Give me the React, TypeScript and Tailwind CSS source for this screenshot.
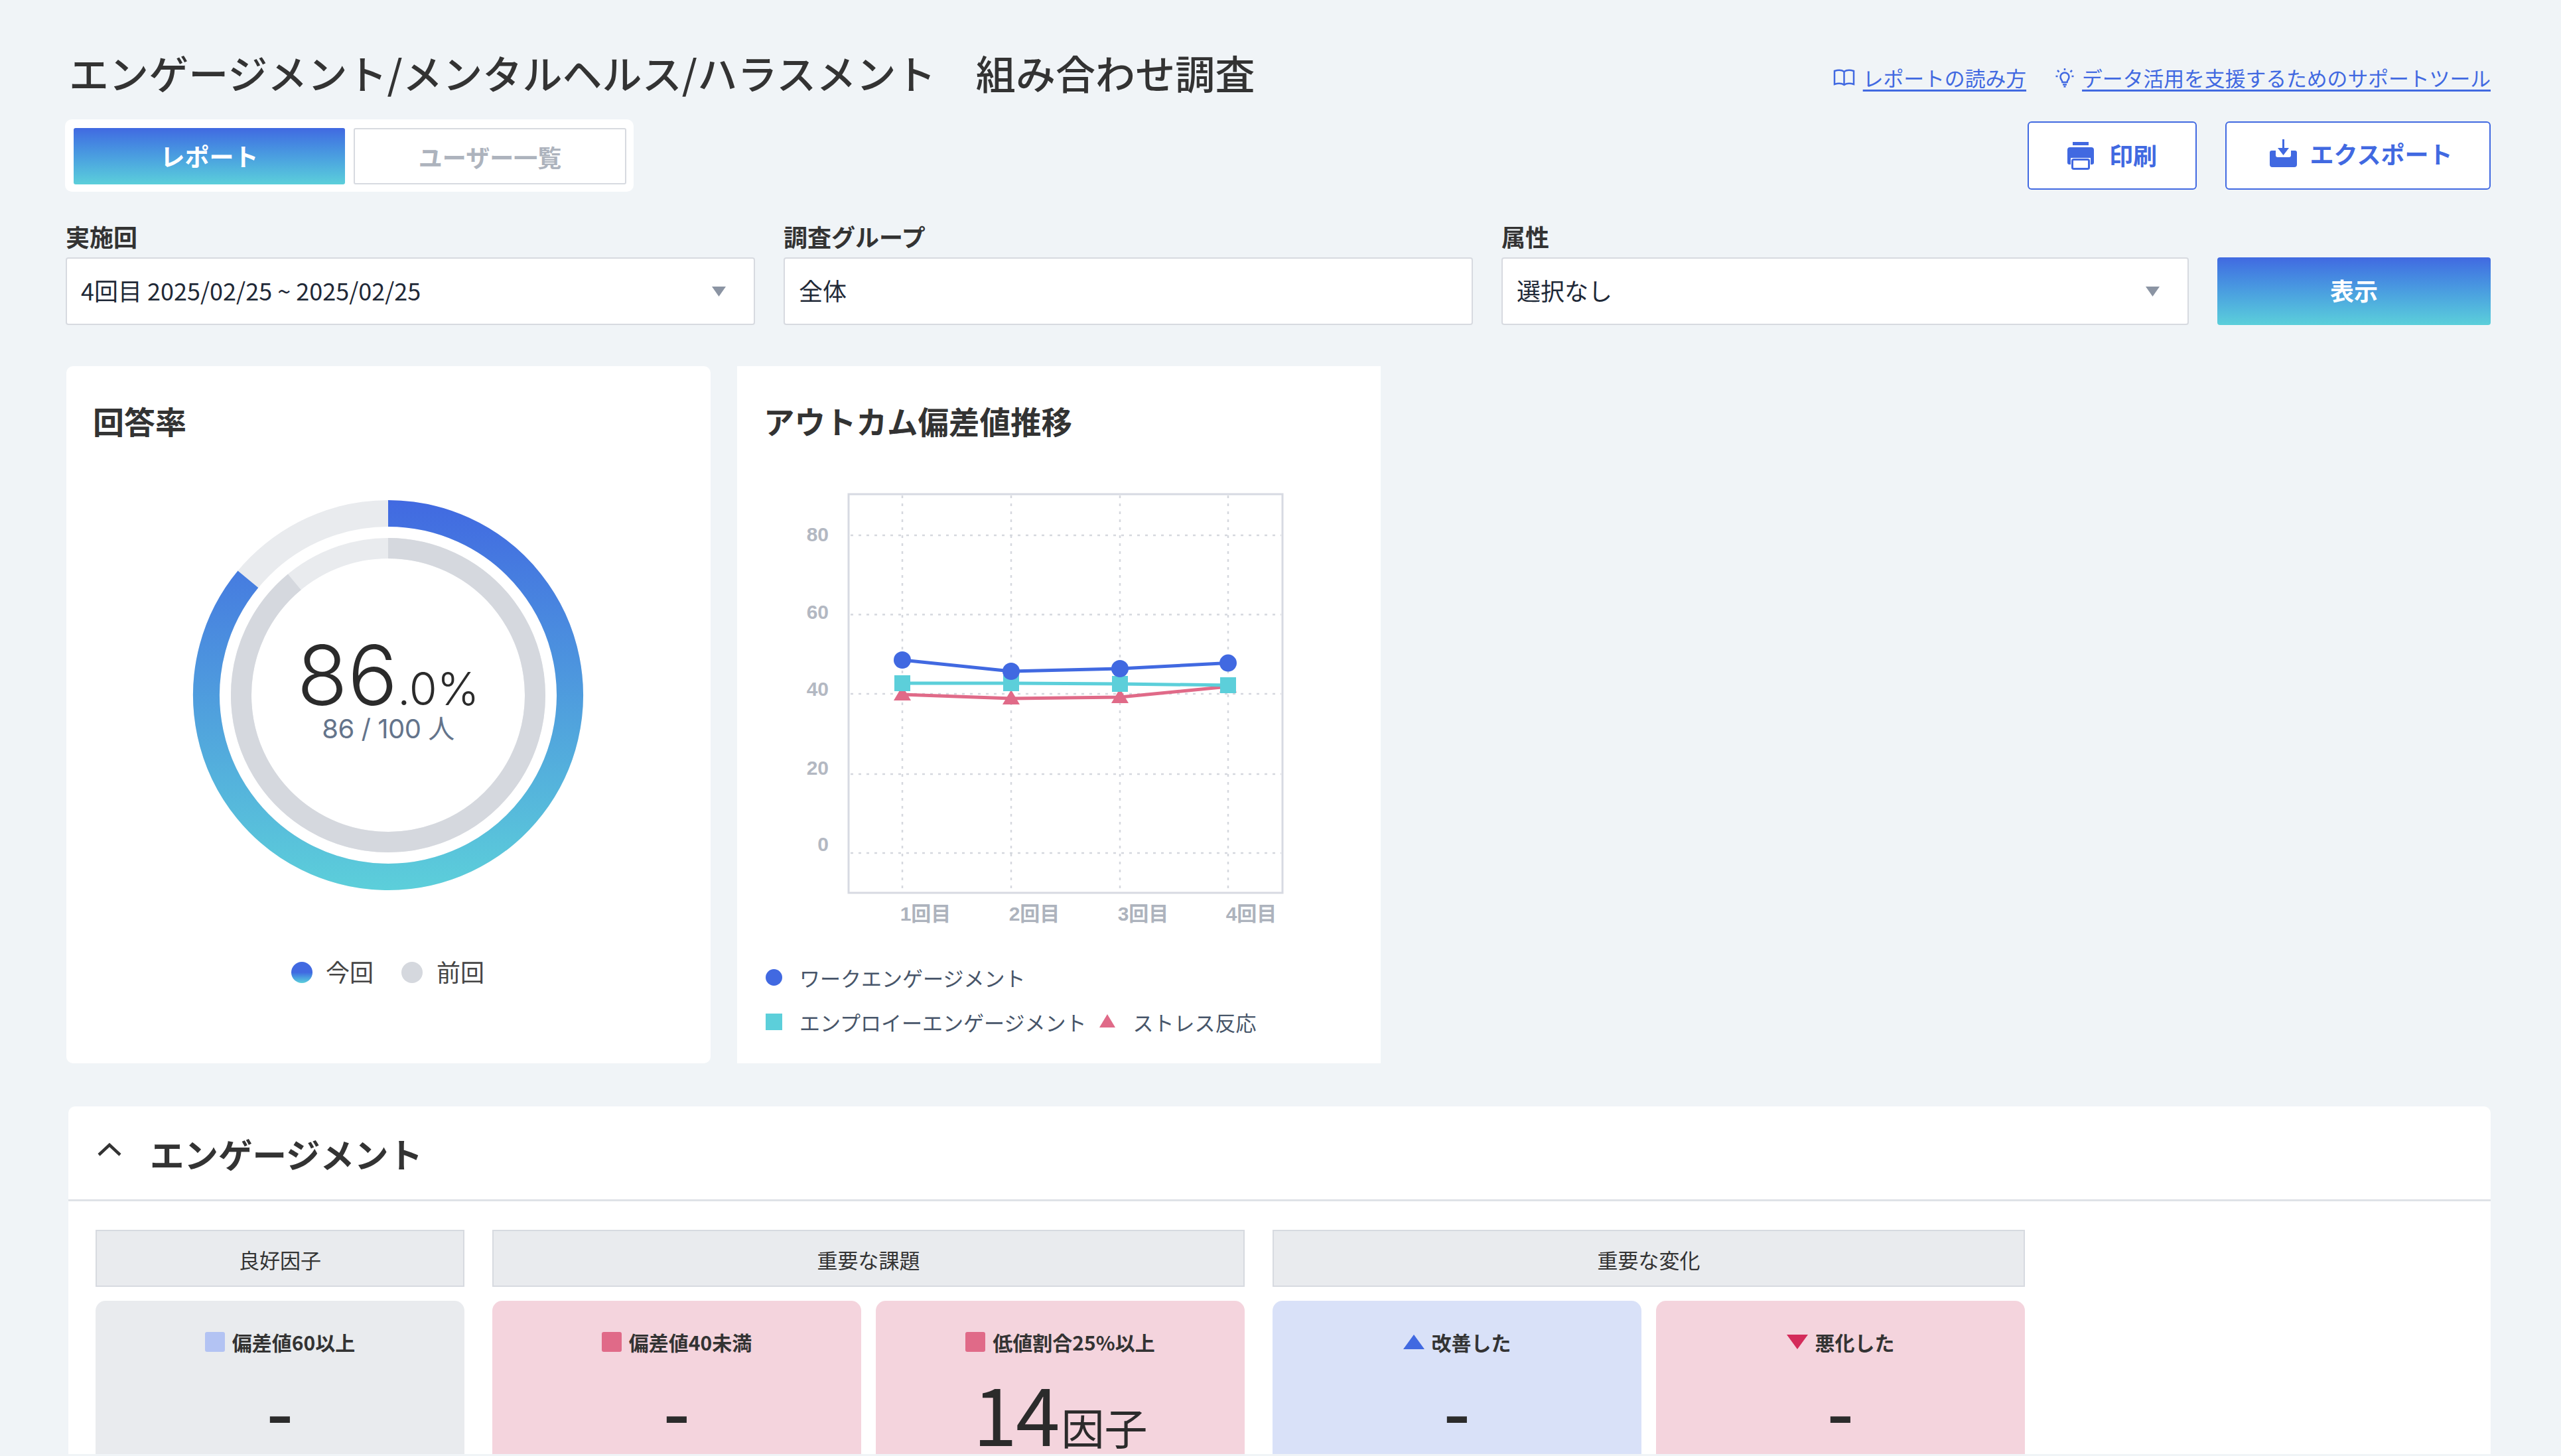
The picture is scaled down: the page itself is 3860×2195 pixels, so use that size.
import React from "react";

const JP = "font-['Noto_Sans_CJK_JP','Noto_Sans',sans-serif]";

function arc(cx: number, cy: number, r: number, frac: number) {
  const a = frac * 2 * Math.PI;
  const x = cx + r * Math.sin(a);
  const y = cy - r * Math.cos(a);
  return `M ${cx} ${cy - r} A ${r} ${r} 0 ${frac > 0.5 ? 1 : 0} 1 ${x} ${y}`;
}

function Caret() {
  return (
    <svg width="21" height="15" viewBox="0 0 21 15" className="shrink-0">
      <path d="M0 0H21L10.5 15Z" fill="#8b94a3" />
    </svg>
  );
}

function Field({ label, value, caret }: { label: string; value: string; caret?: boolean }) {
  return (
    <div className="flex flex-col">
      <div className="h-[53px] pb-[4px] text-[36px] leading-[43px] font-bold text-[#333]">{label}</div>
      <div className="flex h-[102px] items-center justify-between rounded-[4px] border-[2.5px] border-[#d7dae0] bg-white pl-[21px] pr-[42px] text-[36px] text-[#1f2937]">
        <span className="mt-[-4px]">{value}</span>
        {caret && <Caret />}
      </div>
    </div>
  );
}

function Donut() {
  const c = 300;
  return (
    <div className="relative ml-[185px] mt-[84px] h-[600px] w-[600px]">
      <svg width="600" height="600" viewBox="0 0 600 600" className="block">
        <defs>
          <linearGradient id="ring" gradientUnits="userSpaceOnUse" x1="0" y1="6" x2="0" y2="594">
            <stop offset="0" stopColor="#4169e1" />
            <stop offset="1" stopColor="#5ccfda" />
          </linearGradient>
        </defs>
        <circle cx={c} cy={c} r="274" fill="none" stroke="#e9ebee" strokeWidth="40" />
        <path d={arc(c, c, 274, 0.86)} fill="none" stroke="url(#ring)" strokeWidth="40" />
        <circle cx={c} cy={c} r="221.5" fill="none" stroke="#e9ebee" strokeWidth="31" />
        <path d={arc(c, c, 221.5, 0.89)} fill="none" stroke="#d5d8de" strokeWidth="31" />
      </svg>
      <div className="absolute inset-x-0 top-[207px] flex flex-col items-center">
        <div className="h-[125px] leading-[125px] text-[#2b2b2b] font-['Inter',sans-serif]">
          <span className="text-[125px] font-light">86</span>
          <span className="text-[68px] font-light">.0%</span>
        </div>
        <div className="mt-[-6px] text-[40px] leading-[50px] tracking-[-0.5px] text-[#64748b] font-['Inter','Noto_Sans_CJK_JP',sans-serif]">
          86 / 100 人
        </div>
      </div>
    </div>
  );
}

function Chart() {
  const xs = [1360, 1524, 1688, 1851];
  const ys = [807, 926.5, 1046, 1167, 1286];
  const labelY = [805, 922, 1038, 1157, 1272];
  const blue = [995, 1012, 1008, 999.6];
  const teal = [1030, 1030, 1031, 1033];
  const pink = [1047, 1053, 1051, 1035];
  const pts = (v: number[]) => v.map((y, i) => `${xs[i]},${y}`).join(" ");
  return (
    <svg width="809" height="750" viewBox="1151 700 809 750" className="mt-[36px] block">
      {ys.map((y) => (
        <line key={y} x1="1282" x2="1931" y1={y} y2={y} stroke="#d5d8de" strokeWidth="2.5" strokeDasharray="4 8" />
      ))}
      {xs.map((x) => (
        <line key={x} x1={x} x2={x} y1="747" y2="1345" stroke="#d5d8de" strokeWidth="2.5" strokeDasharray="4 8" />
      ))}
      <path d="M1279 745H1933V1346H1279Z" fill="none" stroke="#d7dae2" strokeWidth="3" />
      {["80", "60", "40", "20", "0"].map((t, i) => (
        <text key={t} x="1249" y={labelY[i] + 11} textAnchor="end" fontSize="30" fontWeight="700" fill="#b3b8c2" fontFamily="'Liberation Sans',sans-serif">
          {t}
        </text>
      ))}
      {["1回目", "2回目", "3回目", "4回目"].map((t, i) => (
        <text key={t} x={xs[i] + 35} y="1388" textAnchor="middle" fontSize="30" fontWeight="700" fill="#adb3bd" fontFamily="'Liberation Sans','Noto Sans CJK JP',sans-serif">
          {t}
        </text>
      ))}
      <polyline points={pts(pink)} fill="none" stroke="#e06a88" strokeWidth="5" />
      {pink.map((y, i) => (
        <path key={i} d={`M${xs[i]} ${y - 13}L${xs[i] + 13} ${y + 9}H${xs[i] - 13}Z`} fill="#e06a88" />
      ))}
      <polyline points={pts(teal)} fill="none" stroke="#5ccfda" strokeWidth="5" />
      {teal.map((y, i) => (
        <rect key={i} x={xs[i] - 12} y={y - 12} width="24" height="24" fill="#5ccfda" />
      ))}
      <polyline points={pts(blue)} fill="none" stroke="#4169e1" strokeWidth="5" />
      {blue.map((y, i) => (
        <circle key={i} cx={xs[i]} cy={y} r="13" fill="#4169e1" />
      ))}
    </svg>
  );
}

function Stat({
  bg,
  marker,
  label,
  children,
}: {
  bg: string;
  marker: React.ReactNode;
  label: string;
  children: React.ReactNode;
}) {
  return (
    <div className={`h-[231px] w-[556px] rounded-t-[15px] ${bg} pt-[37px]`}>
      <div className="flex h-[50px] items-center justify-center gap-[11px] text-[30px] font-bold text-[#333]">
        {marker}
        <span>{label}</span>
      </div>
      <div className="mt-[32px] flex h-[110px] items-center justify-center text-[#2b2b2b]">{children}</div>
    </div>
  );
}

function Sq({ color }: { color: string }) {
  return <span className={`h-[30px] w-[30px] rounded-[3px] ${color}`} />;
}

function Dash() {
  return <span className="text-[92px] leading-[100px] font-semibold font-['Inter',sans-serif]">-</span>;
}

function GroupHead({ children }: { children: React.ReactNode }) {
  return (
    <div className="flex h-[86px] items-center justify-center border-[2.5px] border-[#d7dae0] bg-[#e9ebee] pt-[4px] text-[31px] text-[#333]">
      {children}
    </div>
  );
}

export default function App() {
  return (
    <div className={`h-[2195px] w-[3860px] overflow-hidden bg-[#f0f4f7] pl-[100px] pr-[106px] ${JP}`}>
      {/* title row */}
      <div className="flex h-[180px] items-start justify-between pt-[69px]">
        <h1 className="pl-[4px] text-[60px] leading-[80px] font-medium tracking-[0.1px] text-[#333]">
          エンゲージメント/メンタルヘルス/ハラスメント　組み合わせ調査
        </h1>
        <div className="flex items-center gap-[44px] pt-[26px] text-[30.8px] leading-[44px] text-[#4169e1]">
          <a className="flex items-center gap-[12px]">
            <svg width="33" height="26" viewBox="0 0 33 26" fill="none" stroke="#4169e1" strokeWidth="2.5">
              <path d="M16.5 4C13 1.5 7 1.5 2 3V23C7 21.5 13 21.5 16.5 24C20 21.5 26 21.5 31 23V3C26 1.5 20 1.5 16.5 4ZM16.5 4V24" />
            </svg>
            <span className="underline decoration-[2.5px] underline-offset-[5px]">レポートの読み方</span>
          </a>
          <a className="flex items-center gap-[12px]">
            <svg width="28" height="30" viewBox="0 0 28 30" fill="none" stroke="#4169e1" strokeWidth="2.5">
              <path d="M14 1V4M3 4L5.5 6.5M25 4L22.5 6.5M0.5 13H3.5M24.5 13H27.5" />
              <path d="M10.5 22C10.5 19 7.5 18 7.5 14A6.5 6.5 0 0 1 20.5 14C20.5 18 17.5 19 17.5 22ZM11 25.5H17M12.5 28.5H15.5" />
            </svg>
            <span className="underline decoration-[2.5px] underline-offset-[5px]">データ活用を支援するためのサポートツール</span>
          </a>
        </div>
      </div>

      {/* tabs and actions */}
      <div className="flex h-[109px] items-center justify-between">
        <div className="ml-[-2px] flex h-[109px] gap-[13px] rounded-[10px] bg-white py-[13px] pl-[13px] pr-[11px]">
          <button className="h-[85px] w-[409px] rounded-[3px] bg-gradient-to-b from-[#4169e1] to-[#5ccfda] text-[37px] font-bold text-white">
            レポート
          </button>
          <button className="h-[85px] w-[411px] rounded-[3px] border-[2.5px] border-[#d7dae0] bg-white text-[36px] font-bold text-[#adb3bd]">
            ユーザー一覧
          </button>
        </div>
        <div className="flex gap-[43px]">
          <button className="flex h-[103px] w-[255px] items-center justify-center gap-[23px] rounded-[6px] border-[2.5px] border-[#4169e1] bg-white pb-[3px] text-[36px] font-bold text-[#4169e1]">
            <svg width="40" height="42" viewBox="0 0 40 42" className="mt-[3px]">
              <path d="M8 0H32V5H8Z" fill="#4169e1" />
              <path fillRule="evenodd" d="M4 8H36A4 4 0 0 1 40 12V31A3 3 0 0 1 37 34H35V24H5V34H3A3 3 0 0 1 0 31V12A4 4 0 0 1 4 8Z" fill="#4169e1" />
              <rect x="7.5" y="26.5" width="25" height="14" fill="#fff" stroke="#4169e1" strokeWidth="3" rx="2" />
            </svg>
            <span>印刷</span>
          </button>
          <button className="flex h-[103px] w-[400px] items-center justify-center gap-[20px] rounded-[6px] border-[2.5px] border-[#4169e1] bg-white pb-[7px] pl-[9px] text-[36px] font-bold text-[#4169e1]">
            <svg width="41" height="42" viewBox="0 0 41 42">
              <path d="M19 0H22V13H29L20.5 24L12 13H19Z" fill="#4169e1" />
              <path d="M3 17H9V24A3 3 0 0 0 12 27H29A3 3 0 0 0 32 24V17H38A3 3 0 0 1 41 20V38A4 4 0 0 1 37 42H4A4 4 0 0 1 0 38V20A3 3 0 0 1 3 17Z" fill="#4169e1" />
            </svg>
            <span>エクスポート</span>
          </button>
        </div>
      </div>

      {/* filters */}
      <div className="ml-[-1px] mt-[46px] grid grid-cols-[1039px_1039px_1036px_412px] items-end gap-x-[43px]">
        <Field label="実施回" value="4回目 2025/02/25 ~ 2025/02/25" caret />
        <Field label="調査グループ" value="全体" />
        <Field label="属性" value="選択なし" caret />
        <button className="h-[102px] rounded-[4px] bg-gradient-to-b from-[#4169e1] to-[#5ccfda] pb-[4px] text-[36px] font-bold text-white">
          表示
        </button>
      </div>

      {/* cards */}
      <div className="mt-[62px] flex gap-[40px]">
        <section className="h-[1051px] w-[971px] rounded-[10px] bg-white">
          <h2 className="pl-[40px] pt-[52px] text-[47px] leading-[60px] font-bold text-[#333]">回答率</h2>
          <Donut />
          <div className="mt-[91px] flex items-center justify-center pr-[2px] text-[36px] leading-[50px] text-[#444]">
            <span className="mt-[4px] h-[32px] w-[32px] rounded-full bg-gradient-to-b from-[#4169e1] from-50% to-[#5ccfda]" />
            <span className="ml-[20px]">今回</span>
            <span className="ml-[42px] mt-[4px] h-[32px] w-[32px] rounded-full bg-[#d5d8de]" />
            <span className="ml-[21px]">前回</span>
          </div>
        </section>
        <section className="h-[1051px] w-[970px] bg-white pl-[40px]">
          <h2 className="pt-[52px] text-[46.5px] leading-[60px] font-bold text-[#333]">アウトカム偏差値推移</h2>
          <Chart />
          <div className="mt-[-1px] pl-[3px] text-[31px] leading-[50px] text-[#475569]">
            <div className="flex items-center">
              <span className="mt-[-2px] h-[25px] w-[25px] rounded-full bg-[#4169e1]" />
              <span className="ml-[26px]">ワークエンゲージメント</span>
            </div>
            <div className="mt-[17px] flex items-center">
              <span className="mt-[-2px] h-[25px] w-[25px] bg-[#5ccfda]" />
              <span className="ml-[26px]">エンプロイーエンゲージメント</span>
              <svg width="24" height="20" viewBox="0 0 24 20" className="ml-[20px] mt-[-4px]">
                <path d="M12 0L24 20H0Z" fill="#e06a88" />
              </svg>
              <span className="ml-[26px]">ストレス反応</span>
            </div>
          </div>
        </section>
      </div>

      {/* section */}
      <section className="ml-[3px] mt-[65px] h-[524px] rounded-t-[10px] bg-white">
        <div className="flex h-[143px] items-center border-b-[3px] border-[#dfe2e7] pl-[44px]">
          <svg width="36" height="20" viewBox="0 0 36 20" fill="none" stroke="#333" strokeWidth="4.5" className="mt-[-10px]">
            <path d="M2 18L18 3L34 18" />
          </svg>
          <span className="ml-[43px] mt-[2px] text-[51.5px] font-bold text-[#333]">エンゲージメント</span>
        </div>
        <div className="flex gap-[42px] pl-[41px] pt-[43px]">
          <div className="w-[556px]">
            <GroupHead>良好因子</GroupHead>
            <div className="mt-[21px] flex gap-[22px]">
              <Stat bg="bg-[#e9ebee]" marker={<Sq color="bg-[#b3c3f3]" />} label="偏差値60以上">
                <Dash />
              </Stat>
            </div>
          </div>
          <div className="w-[1134px]">
            <GroupHead>重要な課題</GroupHead>
            <div className="mt-[21px] flex gap-[22px]">
              <Stat bg="bg-[#f4d4dd]" marker={<Sq color="bg-[#e06a88]" />} label="偏差値40未満">
                <Dash />
              </Stat>
              <Stat bg="bg-[#f4d4dd]" marker={<Sq color="bg-[#e06a88]" />} label="低値割合25%以上">
                <span className="mt-[-14px] h-[100px] text-[120px] leading-[100px] font-normal tracking-[-2px]">14</span>
                <span className="ml-[4px] mt-[30px] h-[78px] text-[65px] leading-[78px] font-normal">因子</span>
              </Stat>
            </div>
          </div>
          <div className="w-[1134px]">
            <GroupHead>重要な変化</GroupHead>
            <div className="mt-[21px] flex gap-[22px]">
              <Stat
                bg="bg-[#d9e1f8]"
                marker={
                  <svg width="32" height="22" viewBox="0 0 32 22">
                    <path d="M16 0L32 22H0Z" fill="#4169e1" />
                  </svg>
                }
                label="改善した"
              >
                <Dash />
              </Stat>
              <Stat
                bg="bg-[#f4d4dd]"
                marker={
                  <svg width="32" height="22" viewBox="0 0 32 22">
                    <path d="M0 0H32L16 22Z" fill="#d42b5a" />
                  </svg>
                }
                label="悪化した"
              >
                <Dash />
              </Stat>
            </div>
          </div>
        </div>
      </section>
    </div>
  );
}
